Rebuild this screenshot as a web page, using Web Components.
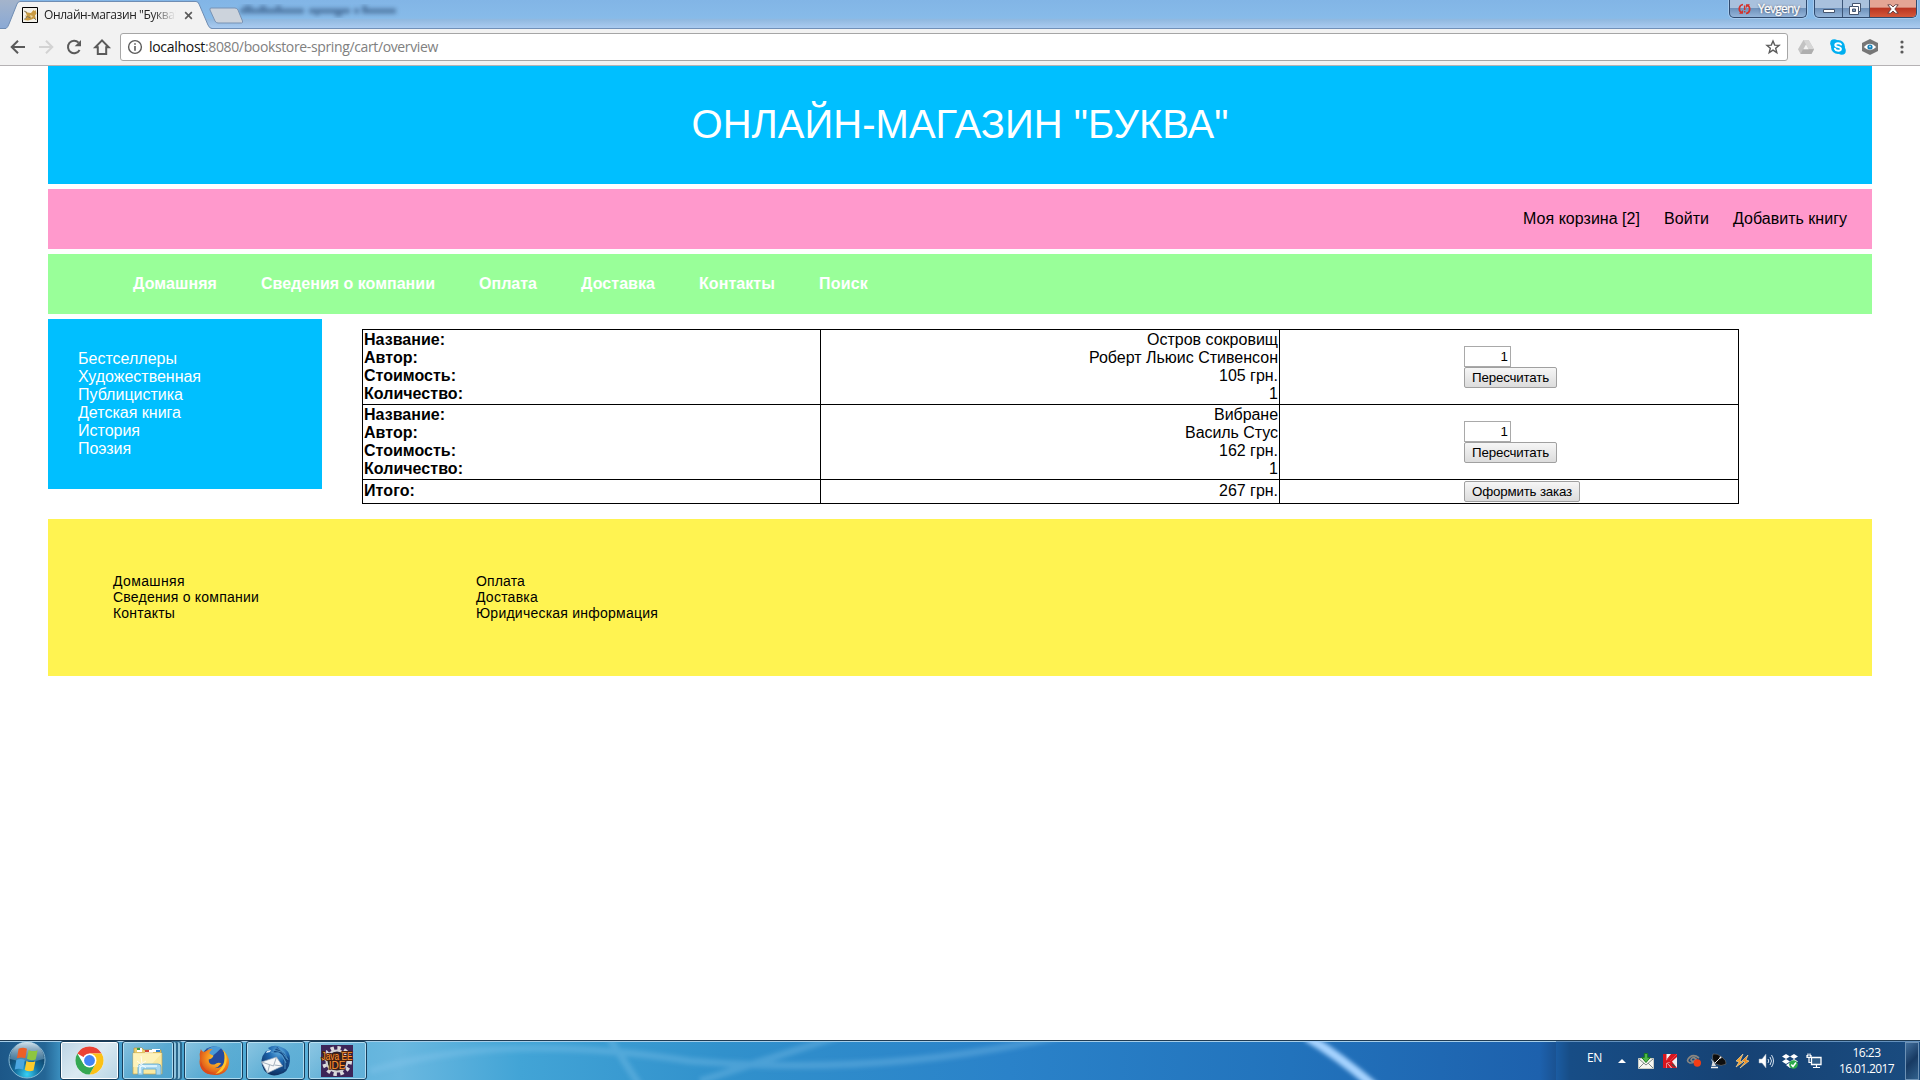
<!DOCTYPE html>
<html lang="ru">
<head>
<meta charset="utf-8">
<title>Онлайн-магазин "Буква"</title>
<style>
html,body{margin:0;padding:0;background:#fff;overflow:hidden}
body{font-family:"Liberation Sans",Arial,sans-serif;font-size:16px;color:#000}
</style>
</head>
<body>
<desktop-screen></desktop-screen>
<script>
const define=(name,css,html,init)=>{
  const t=document.createElement('template');
  t.innerHTML=`<style>*{box-sizing:border-box}:host{display:block;box-sizing:border-box}${css}</style>${html}`;
  customElements.define(name,class extends HTMLElement{
    connectedCallback(){
      if(this.shadowRoot)return;
      this.attachShadow({mode:'open'}).append(t.content.cloneNode(true));
      if(init)init(this,this.shadowRoot);
    }
  });
};

const icons={
back:['0 0 20 20','<path d="M17 10H4.5M10 3.7 3.7 10 10 16.3" fill="none" stroke="#5a5a5a" stroke-width="2"/>'],
forward:['0 0 20 20','<path d="M3 10h12.5M10 3.7 16.3 10 10 16.3" fill="none" stroke="#d3d3d3" stroke-width="2"/>'],
reload:['0 0 20 20','<path d="M15.6 13A6.2 6.2 0 1 1 14.6 5.6" fill="none" stroke="#5a5a5a" stroke-width="2"/><path d="M17 3v6.3h-6.3z" fill="#5a5a5a"/>'],
home:['0 0 20 20','<path d="M10 3.4 3.3 10.2H5.8V17H14.2V10.2H16.7Z" fill="none" stroke="#5a5a5a" stroke-width="2"/>'],
info:['0 0 16 16','<circle cx="8" cy="8" r="6.4" fill="none" stroke="#5a5a5a" stroke-width="1.4"/><path d="M7.2 7h1.6v4.8H7.2zM7.2 4.2h1.6v1.6H7.2z" fill="#5a5a5a"/>'],
star:['0 0 16 16','<path d="m8 2 1.7 4.1 4.4.3-3.4 2.9 1.1 4.3L8 11.2l-3.8 2.4 1.1-4.3L1.9 6.4l4.4-.3z" fill="none" stroke="#5a5a5a" stroke-width="1.4"/>'],
drive:['0 0 16 16','<path d="M5.4 1h5.2L16 10.2 13.4 15H2.6L0 10.2z" fill="#c3c3c3"/><path d="M5.4 1h5.2L16 10.2h-5z" fill="#d6d6d6"/><path d="M2.6 15 5 10.2h11L13.4 15z" fill="#aeaeae"/><path d="m8 5.6 2.7 4.6H5.3z" fill="#f2f2f2"/>'],
skype:['0 0 16 16','<circle cx="8" cy="8" r="7" fill="#00aff0"/><circle cx="4.2" cy="4.2" r="4" fill="#00aff0"/><circle cx="11.8" cy="11.8" r="4" fill="#00aff0"/><path d="M11 5.5C10.4 4 5.5 3.5 5.3 6c-.1 2.4 5.7 1.4 5.6 4-.2 2.6-5.2 2.3-6-.2" fill="none" stroke="#fff" stroke-width="2" stroke-linecap="round"/>'],
eye:['0 0 16 16','<path d="m8 0 8 4v8l-8 4-8-4V4z" fill="#777"/><path d="M1.8 8Q8 1.5 14.2 8 8 14.5 1.8 8" fill="#fff"/><circle cx="8" cy="8" r="2.6" fill="#1681b8"/><circle cx="8" cy="7.6" r=".9" fill="#bfe6f7"/>'],
dots:['0 0 16 16','<g fill="#5a5a5a"><circle cx="8" cy="3" r="1.6"/><circle cx="8" cy="8" r="1.6"/><circle cx="8" cy="13" r="1.6"/></g>'],
tomcat:['0 0 16 16','<path d="M.5.5h15v15H.5z" fill="#f3f1ea" stroke="#000"/><path d="m3 4 2.500 1.500L9 6l2.500-3 1 1 1-1 1 3.500-1.500 2 1 4-2-1-2.500 1-3.500 1-3.500-.5 2-2.500-1.500-2 2 .2z" fill="#c99b43"/><path d="m2 4 3 1.500M2 12.500l3.500-3 3 1.500M12 11l2 2" stroke="#6d6a58" stroke-width=".8" fill="none"/><path d="m8 8 3 1-2 2z" fill="#ecd9a8"/>'],
cross:['0 0 10 10','<path d="m1.3 1.3 7.4 7.4M8.7 1.3 1.3 8.7" stroke="#5a5a5a" stroke-width="1.8"/>'],
sync:['0 0 13 12','<path d="M5 1.5C1 2 0 7 3.2 9.8M8 10.5c4-.5 5-5.5 1.8-8.3" fill="none" stroke="#d3332c" stroke-width="1.7"/><path d="M1 10.7h4V7zM12 1.3H8V5zM5.9 2.5h1.5v4.6H5.9zM5.9 8h1.5v1.6H5.9z" fill="#d3332c"/>'],
min:['0 0 12 12','<path d="M.5 6.5h11v3H.5z" fill="#fff" stroke="#44546e"/>'],
max:['0 0 12 12','<path d="M3.5.5h8v8h-2v3h-9v-8h3z" fill="#fff" stroke="#44546e"/><path d="M3.5 6h3v2.5h-3z" fill="#7f9cbf" stroke="#44546e"/><path d="M9.5 8.5v-5h-6" fill="none" stroke="#44546e"/>'],
close:['0 0 12 10','<path d="M.8.8h3L6 3 8.200.8h3L7.800 5l3.400 4.200h-3L6 7 3.800 9.200h-3L4.200 5z" fill="#fff" stroke="#5d3b40" stroke-width=".9"/>'],
start:['0 0 38 38','<defs><radialGradient id="a" cx=".5" cy=".9" r=".75"><stop offset="0" stop-color="#37d2f5"/><stop offset=".45" stop-color="#146d9e"/><stop offset="1" stop-color="#0e3557"/></radialGradient><linearGradient id="b" x2="0" y2="1"><stop stop-color="#dcecf5" stop-opacity=".95"/><stop offset="1" stop-color="#6fa4c4" stop-opacity=".45"/></linearGradient></defs><circle cx="19" cy="19" r="18" fill="url(#a)" stroke="#86b9d5" stroke-width="1"/><path d="M2 18a17 17 0 0 1 34 0q-17 5-34 0" fill="url(#b)"/><g transform="translate(-2.300 -2.300) scale(1.120)"><path d="M11.500 9q4-2 7.500 0l-1.500 8.500q-4-1.500-7.500 0z" fill="#ec5f26"/><path d="M20.500 10q4 2 8 .3L26.800 18.500q-4 1.500-7.800-.5z" fill="#8dc63f"/><path d="M9.500 19q4-1.600 7.600 0l-1.500 8.500q-4-1.500-7.500 0z" fill="#4ba6e0"/><path d="M18.500 19.800q4 2 8 .3L24.800 28.500q-4 1.500-7.800-.5z" fill="#fdcb2c"/></g>'],
chrome:['0 0 32 32','<circle cx="16" cy="16" r="14.500" fill="#fff"/><path d="M16 16 3.400 8.800A14.500 14.500 0 0 1 28.600 8.800H16z" fill="#ea4335"/><path d="M28.600 8.800A14.500 14.500 0 0 1 16 30.500L22.200 19.600 22.200 12.400 16 8.800z" fill="#fbc116"/><path d="M3.400 8.800A14.500 14.500 0 0 0 16 30.500L22.200 19.600H9.800z" fill="#34a853"/><circle cx="16" cy="16" r="7.200" fill="#fff"/><circle cx="16" cy="16" r="5.600" fill="#4285f4"/>'],
folder:['0 0 34 34','<path d="M3 4h8l2 2h17v22H3z" fill="#ead071" stroke="#b9963e" stroke-width=".7"/><path d="M6 4h5v4H6zM21 5h8v3h-8z" fill="#fff"/><path d="M6 4h3v2H6z" fill="#339b47"/><path d="M25 6h4v2h-4z" fill="#3182d0"/><path d="M14 6h8v3h-8z" fill="#fff"/><path d="M14 6h4v2h-4z" fill="#d14634"/><path d="M2 9h29v21H2z" fill="#f9e9a1" stroke="#c5a650" stroke-width=".7"/><path d="M2 9h29L18 23H2z" fill="#fff5c4" opacity=".7"/><path d="M7 31v-8q0-3 3-3h17q3 0 3 3v8h-5v-6H12v6z" fill="#a7d7ef" stroke="#5ba5cb" stroke-width=".8"/><path d="M9 29v-5q0-2 2-2h15" stroke="#e9faff" stroke-width="1.500" fill="none"/><path d="m10 12 1 8M6 17l9 7M15 17l-9 6" stroke="#fff" opacity=".8"/>'],
firefox:['0 0 32 32','<defs><radialGradient id="f" cx=".6" cy=".35" r=".75"><stop offset="0" stop-color="#ffdf35"/><stop offset=".5" stop-color="#f38b1f"/><stop offset="1" stop-color="#ce3517"/></radialGradient></defs><circle cx="16.500" cy="14.500" r="13" fill="#244b9d"/><path d="M10 4q7-5 14-1l-5 5-5 4-3 3z" fill="#4a9bd7"/><path d="M3 4q1 3 4 3 3-3 8-3-4 3-3 5l4 2q-1 3-5 4 0 6 6 5 4-3 7-1-3 4-7 5 10 0 11-8 1-6-3-11 7 5 7 13-1 13-15 13C5 31 0 22 2 14q-1-5 1-10" fill="url(#f)"/><path d="M26 5q5 6 3 14-2 9-11 11 8-7 9-13 1-7-1-12" fill="#ffc72d"/><path d="M3 17q3 11 14 12-10 3-14-6z" fill="#dc4c1b"/>'],
thunderbird:['0 0 32 32','<defs><radialGradient id="t" cx=".6" cy=".2" r=".9"><stop offset="0" stop-color="#5caae0"/><stop offset=".4" stop-color="#1c64ac"/><stop offset="1" stop-color="#0b244f"/></radialGradient></defs><path d="M7 6 11 5 9 3Q15-1 22 2q10 3 9 14-1 12-12 14-9 2-14-5Q-1 15 7 6" fill="url(#t)"/><path d="m2.500 17 15-5 6 9-15 7z" fill="#f6f8f9" stroke="#93a6b8" stroke-width=".7"/><path d="m2.500 17 12 4 3-9M8.500 28l2-8M23.500 21l-8-1" fill="none" stroke="#a3b0bd"/><path d="M14 8q8-3 10 5t-2 14q8-4 8-14L18 2z" fill="#134783"/><path d="m14 5 9 2 5 7M17 3l8 4 4 8M12 7l11 3 4 8M23 11l3 5 0 8" stroke="#559dce" stroke-width=".8" fill="none"/><path d="m8 6 4-1-1 2-4 1z" fill="#ddeef8"/>'],
eclipse:['0 0 32 32','<rect width="32" height="32" fill="#3d2558"/><circle cx="16" cy="16" r="13" fill="none" stroke="#dcdadd" stroke-width="4" stroke-dasharray="3.400 3.407"/><circle cx="16" cy="16" r="10.500" fill="#29202d" stroke="#d2d0d4" stroke-width="2"/><text x="16" y="15" text-anchor="middle" textLength="31" lengthAdjust="spacingAndGlyphs" font-family="Liberation Sans" font-size="10.500" fill="#ff9738" stroke="#4a200c" stroke-width="2" paint-order="stroke">Java EE</text><text x="16" y="24" text-anchor="middle" font-family="Liberation Sans" font-size="10" fill="#ff9738" stroke="#4a200c" stroke-width="1.500" paint-order="stroke">IDE</text>'],
mail:['0 0 16 16','<path d="M.5 5.500h15v10H.5z" fill="#f7f7f2" stroke="#c9ccc5"/><path d="m1 6 7 6 7-6M1 15l5-5m9 5-5-5" stroke="#7f8986" fill="none"/><path d="M6.300.5h3.400v4h2.600L8 9.500 3.700 4.500h2.600z" fill="#4db848" stroke="#187b20"/>'],
kasper:['0 0 16 16','<path d="M1 1h14v14H1z" fill="#d9151e"/><path d="M5 1h4L5 6zM15 1 7.500 8.500 14 15H9L5 10v5H1V1h4v6l6-6z" fill="#f4f4f4"/><path d="M1 1h3.500v6.500L10 1h5L8 8.300V9L4.500 10v5H1z" fill="#d9151e"/><path d="m5.500 10 4.500 5h5L9 9" fill="#d9151e"/><path d="m10 8.500 5-4.500v11z" fill="#eee"/><path d="m10 11 3 3" stroke="#494949" stroke-width="1.500"/>'],
record:['0 0 16 16','<path d="M13 5Q8 1 4 4-1 8 4 10q5 0 6-4Q6 3 5 7q2 3 4 0" fill="none" stroke="#8b8781" stroke-width="1.700"/><circle cx="11.300" cy="10" r="3.700" fill="#f43d15"/>'],
dish:['0 0 16 16','<path d="M3 1Q1 7 6 11q5 3 10 0 1-3-4-7T3 1" fill="#0e0e0e" stroke="#888" stroke-width=".5"/><path d="M.5 5.500 4 9l2 4H1.500l1-4z" fill="#ddd"/><path d="m5 10 5-5" stroke="#e8e8e8"/><circle cx="10.500" cy="4.500" r="1" fill="#fff"/><path d="M1 14.500h7" stroke="#ededed" stroke-width="1.500"/>'],
flash:['0 0 16 16','<path d="M9 1 2 8l3 1-3 5 7-5-3-1z" fill="#f6a02b" stroke="#ffe0a4" stroke-width=".6"/><path d="m14 2-6 6 3 1-5 6 9-7-3-1z" fill="#f48d19" stroke="#ffe0a4" stroke-width=".6"/>'],
speaker:['0 0 16 16','<path d="M1 6h3l4-5v14l-4-5H1z" fill="#fff" stroke="#9aabba" stroke-width=".5"/><path d="M10 6q1.500 2 0 4M12 4q3 4 0 8M13.500 2q4 6 0 12" fill="none" stroke="#d5e2ef"/>'],
dropbox:['0 0 16 16','<path d="m4 1 4 2.500L4 6 0 3.500zm8 0 4 2.500L12 6 8 3.500zM4 6l4 2.500L4 11 0 8.500zm8 0 4 2.500L12 11 8 8.500zM4 12l4-2.500L12 12l-4 3z" fill="#fff"/><circle cx="11.500" cy="11.500" r="4.300" fill="#2baa48"/><path d="m9.300 11.500 1.700 2 3-4" fill="none" stroke="#fff" stroke-width="1.500"/>'],
network:['0 0 16 16','<path d="M5.500 4.500h9.500v7H5.500z" fill="#315d87" stroke="#fff" stroke-width="1.300"/><path d="M7 14.500h7M10.500 12v2M1 2v2.500h4V2M2 .5v3M4 .5v3M3 4.500v5h2" stroke="#fff" stroke-width="1.200" fill="none"/>']
};
define('ui-icon',':host{flex:none;line-height:0}svg{display:block;width:100%;height:100%;overflow:visible}','',(h,r)=>{
  const [vb,body]=icons[h.getAttribute('name')],s=+h.getAttribute('size')||16;
  h.style.width=s+'px';h.style.height=(+h.getAttribute('h')||s)+'px';
  const b=document.createElement('div');b.style.cssText='width:100%;height:100%';
  b.innerHTML=`<svg viewBox="${vb}">${body}</svg>`;r.append(b);
});

/* One-line label whose tracking is spread to a given width. */
define('fit-label',':host{width:max-content;white-space:pre}span{display:inline-block}','<span></span>',(h,r)=>{
  const s=r.querySelector('span');s.textContent=h.getAttribute('text');
  const w=+h.getAttribute('w');
  if(w){const n=s.getBoundingClientRect().width;s.style.letterSpacing=((w-n)/s.textContent.length)+'px';}
});
const L=(t,w,x='')=>`<fit-label text='${t}' w="${w}" ${x}></fit-label>`;

define('window-buttons',`
:host{display:flex;gap:7px;padding-right:3px;height:18px}
div{display:flex;border:1px solid #2f4a6e;border-top:0;border-radius:0 0 5px 5px;overflow:hidden;box-shadow:0 0 0 1px #b5d3f2aa;background:linear-gradient(#a9c1dd 0 45%,#6f92bb 50%,#94b5da)}
.user{width:78px;height:18px;align-items:center;gap:7px;padding-left:8px;font:12px/16px "Open Sans",sans-serif;color:#fff;-webkit-text-stroke:.3px #fff;text-shadow:0 0 2px #334}
.ctl{width:103px;height:18px}
span{display:flex;align-items:center;justify-content:center;border-right:1px solid #3c5678}
.a{width:28px}.b{width:27px;padding-right:2px}.c{flex:1;border:0;background:linear-gradient(#e4a595 0 42%,#b93522 48%,#d4583b)}`,
`<div class="user"><ui-icon name="sync" size="13" h="12"></ui-icon>${L('Yevgeny',41)}</div>
<div class="ctl"><span class="a"><ui-icon name="min" size="12"></ui-icon></span><span class="b"><ui-icon name="max" size="12"></ui-icon></span><span class="c"><ui-icon name="close" size="12" h="10"></ui-icon></span></div>`);

define('tab-strip',`
:host{height:29px;display:flex;justify-content:space-between;position:relative;border-bottom:1px solid #7190b8;background:linear-gradient(#82b5e6,#87bbe9 65%,#91b9e0 70%,#aacbf0)}
.ghost{position:absolute;left:240px;top:1px;width:158px;height:20px;overflow:visible}
.shade{position:absolute;left:0;top:0;width:20px;height:28px;background:linear-gradient(#a4b4cb,#8aa9d5)}
.tab{position:relative;width:250px;height:29px}
.tab>svg{position:absolute;left:0;top:0}
.in{position:relative;display:flex;align-items:center;height:26px;margin:2px 0 0 22px;font:12px/18px "Open Sans",sans-serif;color:#222}
.t{width:132px;margin-left:6px;overflow:hidden;-webkit-mask:linear-gradient(90deg,#000 108px,transparent 132px);mask:linear-gradient(90deg,#000 108px,transparent 132px)}
ui-icon[name=cross]{margin-left:8px}`,
`<div class="shade"></div><svg class="ghost" viewBox="0 0 158 20" aria-hidden="true"><defs><filter id="s" x="-10%" y="-60%" width="120%" height="220%"><feGaussianBlur stdDeviation="2.200"/></filter></defs><path filter="url(#s)" opacity=".6" d="M0 10H64M69 10H110M114 10h5M122 10H156M4 7h8M20 7h6M36 7h5M75 12h4M95 13h7M122 7h5" stroke="#31557f" stroke-width="5"/></svg>
<div class="tab"><svg width="250" height="29"><path d="M0 28.500H6Q8 27 9 24L17 4Q18 1.500 20 1.500H196Q198 1.500 199 4L208 25Q209.500 28.500 212 28.500V29.500H0z" fill="#f2f2f2" stroke="#6f8db3"/><path d="M211 8h24q2 0 3 2l4.500 11q.5 2-1 2H218q-2 0-3-2L210 10q-.5-2 1-2" fill="#ccd3dc" stroke="#7893b5"/></svg>
<div class="in"><ui-icon name="tomcat" size="16"></ui-icon><div class="t">${L('Онлайн-магазин "Буква"',135)}</div><ui-icon name="cross" size="9"></ui-icon></div></div>
<window-buttons></window-buttons>`);

define('tool-bar',`
:host{height:37px;display:flex;align-items:center;background:#f2f2f2;border-bottom:1px solid #b5b2b4;padding:0 10px 0 8px}
.nav{display:flex;gap:8px;width:112px}
.box{flex:1;height:28px;display:flex;align-items:center;background:#fff;border:1px solid #a6a6a6;border-radius:3px;padding:0 6px;font:14px/20px "Open Sans",sans-serif;color:#808080}
.url{flex:1;display:flex;padding-left:6px}.host{color:#111}
.ext{display:flex;gap:16px;margin-left:10px}`,
`<div class="nav"><ui-icon name="back" size="20"></ui-icon><ui-icon name="forward" size="20"></ui-icon><ui-icon name="reload" size="20"></ui-icon><ui-icon name="home" size="20"></ui-icon></div>
<div class="box"><ui-icon name="info" size="16"></ui-icon><div class="url">${L('localhost',56,'class="host"')}${L(':8080/bookstore-spring/cart/overview',233)}</div><ui-icon name="star" size="16"></ui-icon></div>
<div class="ext"><ui-icon name="drive"></ui-icon><ui-icon name="skype"></ui-icon><ui-icon name="eye"></ui-icon><ui-icon name="dots"></ui-icon></div>`);

define('shop-header',`:host{height:118px;background:#00bfff;color:#fff;display:flex;align-items:center;justify-content:center;font-size:40px;line-height:46px;padding-bottom:2px}`,L('ОНЛАЙН-МАГАЗИН "БУКВА"',537));
define('user-links',`:host{height:60px;background:#f9c;display:flex;align-items:center;justify-content:flex-end;gap:24px;padding-right:25px;line-height:18px}`,
L('Моя корзина [2]',117)+L('Войти',45)+L('Добавить книгу',114));
define('main-nav',`:host{height:60px;background:#9f9;color:#fff;font-weight:bold;display:flex;align-items:center;gap:44px;padding-left:85px;line-height:18px}`,
[['Домашняя',84],['Сведения о компании',174],['Оплата',58],['Доставка',74],['Контакты',76],['Поиск',49]].map(a=>L(...a)).join(''));
define('genre-list',`:host{width:274px;height:170px;background:#00bfff;color:#fff;padding:31px 30px;line-height:18px}fit-label{height:18px}`,
[['Бестселлеры',99],['Художественная',123],['Публицистика',105],['Детская книга',103],['История',62],['Поэзия',53]].map(a=>L(...a)).join(''));

define('push-button',`:host{width:max-content}button{height:21px;margin:0;padding:0;border:1px solid #a0a0a0;border-radius:2px;background:linear-gradient(#f6f6f6,#dcdcdc);font:13.333px/16px "Liberation Sans";color:#000;display:flex;align-items:center;justify-content:center}`,'<button></button>',(h,r)=>{
  const b=r.querySelector('button');b.style.width=h.getAttribute('w')+'px';b.innerHTML=L(h.getAttribute('text'),h.getAttribute('w')-16);
});
define('qty-form',`input{display:block;width:47px;height:21px;border:1px solid #a9a9a9;padding:1px 2px;margin:0;text-align:right;font:13.333px "Liberation Sans";color:#000;background:#fff;outline:0}`,
`<input value="1" aria-label="Количество"><push-button text="Пересчитать" w="93"></push-button>`);

define('cart-row',`:host{display:grid;grid-template-columns:458px 459px 460px;border-top:1px solid #000;height:75px}
:host([total]){height:25px;border-bottom:1px solid #000}
div{border-left:1px solid #000;padding:1px;line-height:18px;display:flex;flex-direction:column}
.k{font-weight:bold}.v{align-items:flex-end}.f{border-right:1px solid #000;justify-content:center;padding-left:184px}
:host([total]) .k,:host([total]) .v{justify-content:center;padding-bottom:3px}
fit-label{height:18px}`,
`<div class="k"></div><div class="v"></div><div class="f"></div>`,(h,r)=>{
  const q=s=>r.querySelector(s),total=h.hasAttribute('total');
  const d=JSON.parse(h.getAttribute('values'));
  q('.k').innerHTML=(total?[['Итого:',51]]:[['Название:',81],['Автор:',54],['Стоимость:',92],['Количество:',99]]).map(a=>L(...a)).join('');
  q('.v').innerHTML=d.map(a=>L(...a)).join('');
  q('.f').innerHTML=total?'<push-button text="Оформить заказ" w="116"></push-button>':'<qty-form></qty-form>';
});
define('cart-table',':host{width:1377px}',
`<cart-row values='[["Остров сокровищ",131],["Роберт Льюис Стивенсон",189],["105 грн.",59],["1",9]]'></cart-row>
<cart-row values='[["Вибране",64],["Василь Стус",93],["162 грн.",59],["1",9]]'></cart-row>
<cart-row total values='[["267 грн.",59]]'></cart-row>`);

define('shop-footer',`:host{height:157px;background:#fff351;display:flex;align-items:center;padding-left:65px;font-size:14px;line-height:16px}section{width:363px;padding-bottom:1px}fit-label{height:16px}`,
`<section>${L('Домашняя',72)+L('Сведения о компании',146)+L('Контакты',62)}</section><section>${L('Оплата',49)+L('Доставка',62)+L('Юридическая информация',182)}</section>`);

define('shop-page',`:host{flex:1;padding:0 48px;background:#fff;display:flex;flex-direction:column;gap:5px}
.mid{display:flex;height:195px;gap:40px}cart-table{margin-top:10px}`,
`<shop-header></shop-header><user-links></user-links><main-nav></main-nav><div class="mid"><genre-list></genre-list><cart-table></cart-table></div><shop-footer></shop-footer>`);

define('task-button',`:host{height:39px;width:59px;display:flex;align-items:center;justify-content:center;padding-right:1px;border:1px solid #163e5c;border-radius:3px;background:linear-gradient(135deg,#a8d3e8aa,#71b4d566 55%,#5aa8cf66);box-shadow:inset 0 0 0 1px #cdeaf8bb}
:host([active]){background:linear-gradient(135deg,#bcd4e4,#dbeaf2 50%,#b8d5e4);box-shadow:inset 0 0 0 1px #fff}
:host([stack]){width:52px;box-shadow:inset 0 0 0 1px #cdeaf8bb,3px 0 0 -1px #8fc4df,4px 0 0 #2b678c,7px 0 0 -1px #8fc4df,8px 0 0 #2b678c}`,'<slot></slot>');

define('system-tray',`
:host{width:364px;height:39px;display:flex;align-items:center;background:linear-gradient(90deg,#1b5ca2,#174d86 14px,#164274 50%,#1a4c80);color:#fff;font:12px/16px "Open Sans",sans-serif;box-shadow:inset 0 1px #6491bd}
.en{margin-left:31px;padding-bottom:5px;width:31px}
.up{width:0;height:0;border:4px solid transparent;border-top:0;border-bottom-color:#fff;margin-right:12px}
.ic{display:flex;gap:8px}
.clock{flex:1;display:flex;flex-direction:column;align-items:center;font-size:12px;padding-left:6px}
.show{width:14px;height:38px;margin-right:1px;border:1px solid #6c91b5;background:linear-gradient(135deg,#426f9c,#173a63 50%,#31618d)}`,
`<div class="en">${L('EN',15)}</div><div class="up"></div><div class="ic">${['mail','kasper','record','dish','flash','speaker','dropbox','network'].map(n=>`<ui-icon name="${n}"></ui-icon>`).join('')}</div>
<div class="clock">${L('16:23',28)+L('16.01.2017',55)}</div><div class="show"></div>`);

define('task-bar',`
:host{height:40px;position:relative;display:flex;justify-content:space-between;border-top:1px solid #203c54;background:linear-gradient(90deg,#1c5788 0,#246696 45px,#4098c8 64px,#4ea9d4 240px,#6ab8e0 400px,#42a4d6 520px,#3191cc 720px,#2a82c9 1010px,#2273bc 1290px,#1d61ad 1540px,#17457a 1570px)}
.glow{position:absolute;left:0;top:0;width:1556px;height:39px}
.apps{position:relative;display:flex;gap:3px}.start{width:57px;display:flex;padding-left:8px}
task-button[stack]{margin-right:7px}
system-tray{position:relative}`,
`<svg class="glow" viewBox="0 0 1556 39"><defs><filter id="g"><feGaussianBlur stdDeviation="2"/></filter></defs><path d="M0 .5H1556" stroke="#a6cee9"/><g filter="url(#g)" fill="none"><path d="M1307-4Q1338 14 1375 46" stroke="#a6d3ff" stroke-width="9"/><path d="M370 30Q500-10 690 20 880 36 1060-5M608-5 640 45M700 40 840-5" stroke="#8acbef" stroke-opacity=".3" stroke-width="7"/></g></svg>
<div class="apps"><div class="start"><ui-icon name="start" size="38"></ui-icon></div>
<task-button active><ui-icon name="chrome" size="31"></ui-icon></task-button>
<task-button stack><ui-icon name="folder" size="34"></ui-icon></task-button>
<task-button><ui-icon name="firefox" size="31"></ui-icon></task-button>
<task-button><ui-icon name="thunderbird" size="32"></ui-icon></task-button>
<task-button><ui-icon name="eclipse" size="32"></ui-icon></task-button></div>
<system-tray></system-tray>`);

define('desktop-screen',':host{display:flex;flex-direction:column;width:1920px;height:1080px;overflow:hidden}','<tab-strip></tab-strip><tool-bar></tool-bar><shop-page></shop-page><task-bar></task-bar>');
</script>
</body>
</html>
